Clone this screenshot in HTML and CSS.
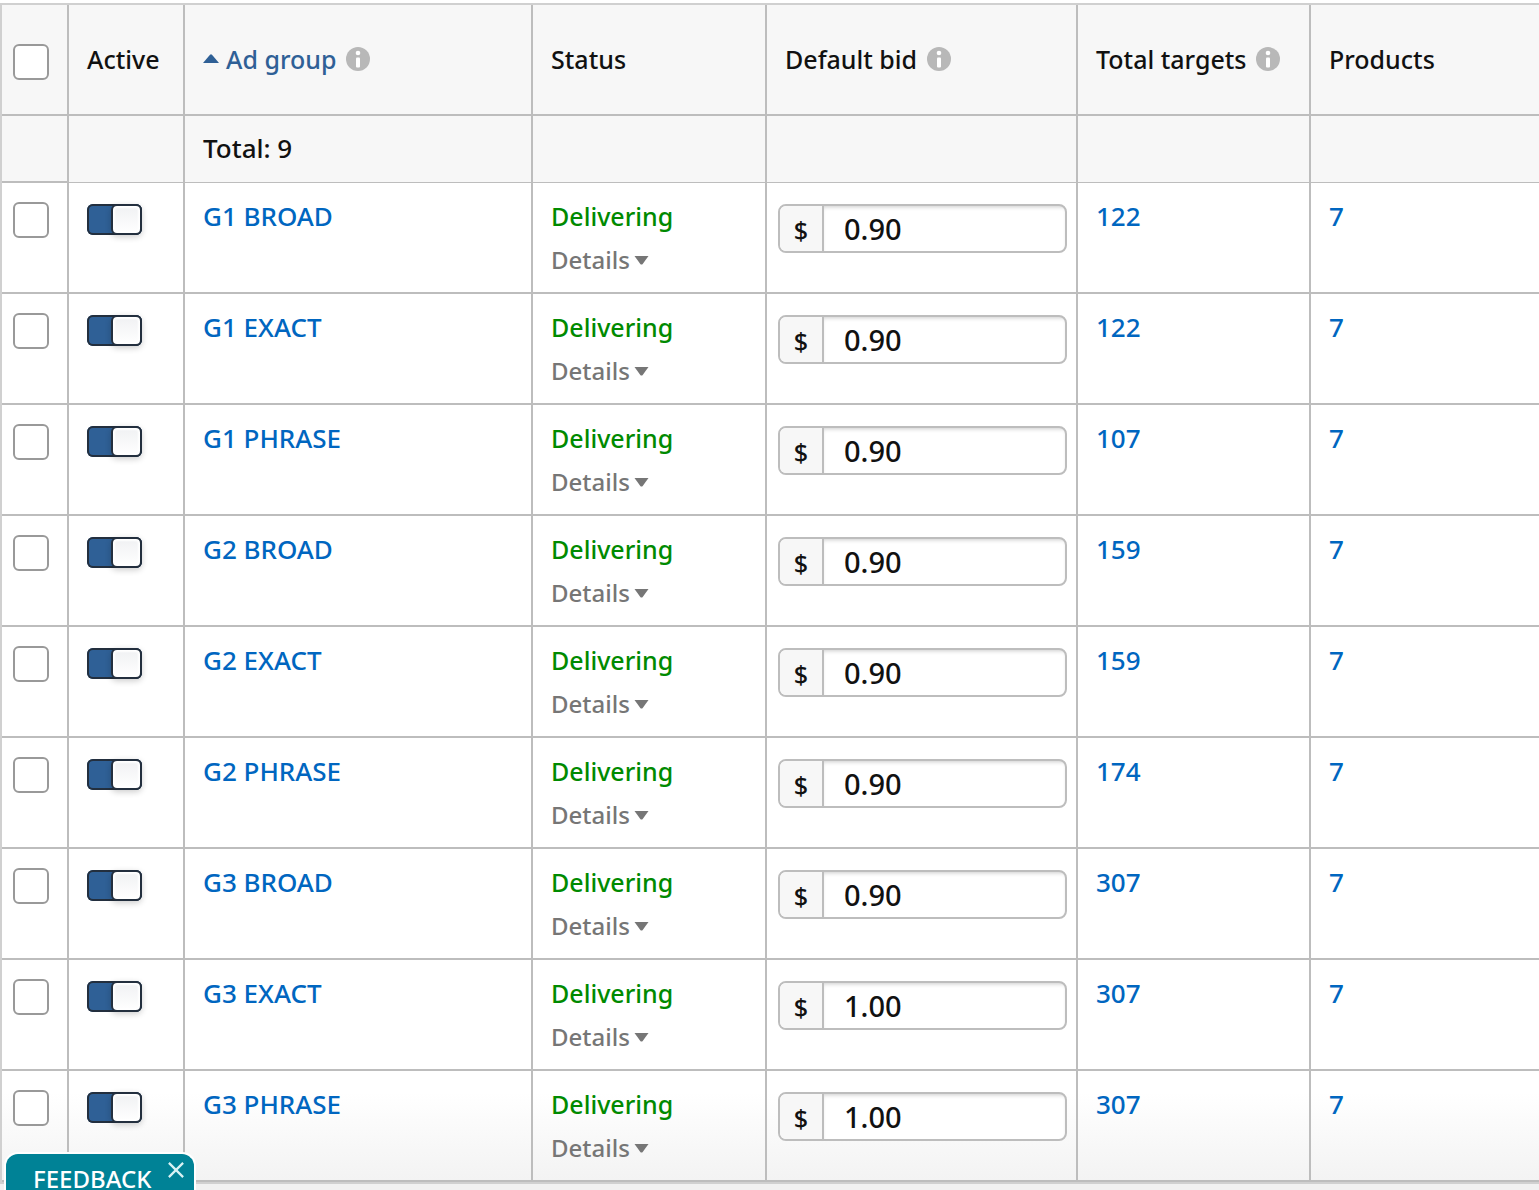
FILE: index.html
```
<!DOCTYPE html>
<html lang="en">
<head>
<meta charset="utf-8">
<title>Ad groups</title>
<link rel="stylesheet" href="styles.css">
</head>
<body>
<svg class="symbols">
  <symbol id="info" viewBox="0 0 24 24"><circle cx="12" cy="12" r="12" fill="#b8b8b8"/><circle cx="12" cy="6" r="2.3" fill="#fff"/><rect x="10" y="10.5" width="4" height="10" rx="1" fill="#fff"/></symbol>
  <symbol id="caret" viewBox="0 0 14 9"><path d="M0 0h14L8 8.200q-1 .8-2 0z" fill="currentColor"/></symbol>
  <symbol id="sort" viewBox="0 0 16 9"><path d="M0 9 7 .700q1-.9 2 0L16 9z" fill="currentColor"/></symbol>
</svg>
<main class="panel">
<table class="grid">
  <colgroup><col class="col-select"><col class="col-active"><col class="col-group"><col class="col-status"><col class="col-bid"><col class="col-targets"><col></colgroup>
  <thead>
    <tr class="head">
      <th scope="col"><input class="check" type="checkbox" aria-label="Select all"></th>
      <th scope="col">Active</th>
      <th scope="col"><span class="label"><a class="sorted" href="#"><svg class="sort"><use href="#sort"/></svg>Ad group</a><svg class="info"><use href="#info"/></svg></span></th>
      <th scope="col">Status</th>
      <th scope="col"><span class="label">Default bid<svg class="info"><use href="#info"/></svg></span></th>
      <th scope="col"><span class="label">Total targets<svg class="info"><use href="#info"/></svg></span></th>
      <th scope="col">Products</th>
    </tr>
    <tr class="total"><td></td><td></td><td>Total: 9</td><td></td><td></td><td></td><td></td></tr>
  </thead>
  <tbody>
    <tr>
      <td><input class="check" type="checkbox" aria-label="Select G1 BROAD"></td>
      <td><input class="toggle" type="checkbox" checked aria-label="G1 BROAD active"></td>
      <td><a href="#">G1 BROAD</a></td>
      <td><div class="state">Delivering</div><button class="details" type="button">Details<svg class="caret"><use href="#caret"/></svg></button></td>
      <td><label class="bid"><span class="unit">$</span><input type="text" value="0.90" aria-label="Default bid"></label></td>
      <td><a href="#">122</a></td>
      <td><a href="#">7</a></td>
    </tr>
    <tr>
      <td><input class="check" type="checkbox" aria-label="Select G1 EXACT"></td>
      <td><input class="toggle" type="checkbox" checked aria-label="G1 EXACT active"></td>
      <td><a href="#">G1 EXACT</a></td>
      <td><div class="state">Delivering</div><button class="details" type="button">Details<svg class="caret"><use href="#caret"/></svg></button></td>
      <td><label class="bid"><span class="unit">$</span><input type="text" value="0.90" aria-label="Default bid"></label></td>
      <td><a href="#">122</a></td>
      <td><a href="#">7</a></td>
    </tr>
    <tr>
      <td><input class="check" type="checkbox" aria-label="Select G1 PHRASE"></td>
      <td><input class="toggle" type="checkbox" checked aria-label="G1 PHRASE active"></td>
      <td><a href="#">G1 PHRASE</a></td>
      <td><div class="state">Delivering</div><button class="details" type="button">Details<svg class="caret"><use href="#caret"/></svg></button></td>
      <td><label class="bid"><span class="unit">$</span><input type="text" value="0.90" aria-label="Default bid"></label></td>
      <td><a href="#">107</a></td>
      <td><a href="#">7</a></td>
    </tr>
    <tr>
      <td><input class="check" type="checkbox" aria-label="Select G2 BROAD"></td>
      <td><input class="toggle" type="checkbox" checked aria-label="G2 BROAD active"></td>
      <td><a href="#">G2 BROAD</a></td>
      <td><div class="state">Delivering</div><button class="details" type="button">Details<svg class="caret"><use href="#caret"/></svg></button></td>
      <td><label class="bid"><span class="unit">$</span><input type="text" value="0.90" aria-label="Default bid"></label></td>
      <td><a href="#">159</a></td>
      <td><a href="#">7</a></td>
    </tr>
    <tr>
      <td><input class="check" type="checkbox" aria-label="Select G2 EXACT"></td>
      <td><input class="toggle" type="checkbox" checked aria-label="G2 EXACT active"></td>
      <td><a href="#">G2 EXACT</a></td>
      <td><div class="state">Delivering</div><button class="details" type="button">Details<svg class="caret"><use href="#caret"/></svg></button></td>
      <td><label class="bid"><span class="unit">$</span><input type="text" value="0.90" aria-label="Default bid"></label></td>
      <td><a href="#">159</a></td>
      <td><a href="#">7</a></td>
    </tr>
    <tr>
      <td><input class="check" type="checkbox" aria-label="Select G2 PHRASE"></td>
      <td><input class="toggle" type="checkbox" checked aria-label="G2 PHRASE active"></td>
      <td><a href="#">G2 PHRASE</a></td>
      <td><div class="state">Delivering</div><button class="details" type="button">Details<svg class="caret"><use href="#caret"/></svg></button></td>
      <td><label class="bid"><span class="unit">$</span><input type="text" value="0.90" aria-label="Default bid"></label></td>
      <td><a href="#">174</a></td>
      <td><a href="#">7</a></td>
    </tr>
    <tr>
      <td><input class="check" type="checkbox" aria-label="Select G3 BROAD"></td>
      <td><input class="toggle" type="checkbox" checked aria-label="G3 BROAD active"></td>
      <td><a href="#">G3 BROAD</a></td>
      <td><div class="state">Delivering</div><button class="details" type="button">Details<svg class="caret"><use href="#caret"/></svg></button></td>
      <td><label class="bid"><span class="unit">$</span><input type="text" value="0.90" aria-label="Default bid"></label></td>
      <td><a href="#">307</a></td>
      <td><a href="#">7</a></td>
    </tr>
    <tr>
      <td><input class="check" type="checkbox" aria-label="Select G3 EXACT"></td>
      <td><input class="toggle" type="checkbox" checked aria-label="G3 EXACT active"></td>
      <td><a href="#">G3 EXACT</a></td>
      <td><div class="state">Delivering</div><button class="details" type="button">Details<svg class="caret"><use href="#caret"/></svg></button></td>
      <td><label class="bid"><span class="unit">$</span><input type="text" value="1.00" aria-label="Default bid"></label></td>
      <td><a href="#">307</a></td>
      <td><a href="#">7</a></td>
    </tr>
    <tr>
      <td><input class="check" type="checkbox" aria-label="Select G3 PHRASE"></td>
      <td><input class="toggle" type="checkbox" checked aria-label="G3 PHRASE active"></td>
      <td><a href="#">G3 PHRASE</a></td>
      <td><div class="state">Delivering</div><button class="details" type="button">Details<svg class="caret"><use href="#caret"/></svg></button></td>
      <td><label class="bid"><span class="unit">$</span><input type="text" value="1.00" aria-label="Default bid"></label></td>
      <td><a href="#">307</a></td>
      <td><a href="#">7</a></td>
    </tr>
  </tbody>
</table>
</main>
<aside class="feedback">
  <a href="#">FEEDBACK</a>
  <button type="button" aria-label="Close feedback"><svg viewBox="0 0 18 18"><path d="M1 1l16 16M17 1L1 17" stroke="#d9f2f4" stroke-width="2.500"/></svg></button>
</aside>
</body>
</html>
```
FILE: styles.css
```
*, *::before { box-sizing: border-box; }
body {
  margin: 0;
  background: #f1f1f1;
  color: #111;
  font-family: "Noto Sans", "Open Sans", sans-serif;
  font-size: 25px;
  font-weight: 500;
  line-height: 34px;
}
a { color: #0066c0; text-decoration: none; }
.symbols { display: none; }
.panel {
  padding-top: 3px;
  background: #fff;
}
.grid {
  width: 100%;
  table-layout: fixed;
  border-collapse: separate;
  border-spacing: 0;
  border: 2px solid #d0d0d0;
  border-right: 0;
}
.col-select { width: 67px; }
.col-active { width: 116px; }
.col-group { width: 348px; }
.col-status { width: 234px; }
.col-bid { width: 311px; }
.col-targets { width: 233px; }
th, td {
  padding: 0 0 0 18px;
  border: 0 solid #bdbdbd;
  border-width: 0 2px 2px 0;
  text-align: left;
  white-space: nowrap;
}
th { font-weight: 500; }
th:last-child, td:last-child { border-right: 0; }
th:first-child, td:first-child { padding-left: 11px; }
.head { height: 111px; background: #f7f7f7; }
.head th { padding-bottom: 2px; }
.head th:first-child { padding-bottom: 0; padding-top: 4px; }
.total { height: 67px; background: #f7f7f7; }
.total td { padding-bottom: 2px; border-bottom-width: 1px; font-size: 26px; }
.total td:first-child { border-bottom-width: 2px; }
tbody tr { height: 111px; background: #fff; }
tbody td { padding-top: 16px; vertical-align: top; }
tbody td > a { display: inline-block; font-size: 26px; }
tbody tr:last-child td { background: linear-gradient(#fff 20%, #f3f3f3); }
.label, .sorted { display: flex; align-items: center; }
.label { gap: 10px; }
.sorted { gap: 7px; color: #2f6096; }
.sort { width: 16px; height: 9px; }
.info { width: 24px; height: 24px; }
.check, .toggle {
  display: block;
  appearance: none;
  margin: 0;
}
.check {
  width: 36px;
  height: 36px;
  border: 2px solid #999;
  border-radius: 6px;
  background: #fff;
}
td .check { margin-top: 3px; }
.toggle {
  display: flex;
  justify-content: flex-end;
  width: 55px;
  height: 31px;
  margin-top: 5px;
  border-radius: 6px;
  background: #2f6096;
  box-shadow: inset 0 0 0 2px #232f3e;
}
.toggle::before {
  content: "";
  width: 31px;
  height: 31px;
  border: 2px solid #232f3e;
  border-radius: 6px;
  background: linear-gradient(#f0f1f3, #fff);
  box-shadow: inset 0 0 2px 2px #fff, 0 2px 6px #0003;
}
.state { color: #008a00; }
.details {
  display: flex;
  align-items: center;
  gap: 4px;
  margin-top: 10px;
  padding: 0;
  border: 0;
  background: none;
  color: #767676;
  font: inherit;
  font-size: 24px;
  line-height: 34px;
}
.caret { width: 15px; height: 9px; }
td:nth-child(5) { padding-left: 11px; padding-right: 9px; }
.bid {
  display: flex;
  height: 49px;
  margin-top: 5px;
  border: 2px solid #bdbdbd;
  border-radius: 8px;
  background: #fff;
  overflow: hidden;
}
.unit {
  width: 44px;
  padding-top: 7px;
  border-right: 2px solid #bdbdbd;
  background: #f7f7f7;
  text-align: center;
}
.bid input {
  flex: 1;
  min-width: 0;
  padding: 0 20px;
  border: 0;
  background: transparent;
  box-shadow: inset 0 3px 4px -2px #0003;
  color: #111;
  font: inherit;
  font-size: 29px;
}
.feedback {
  position: fixed;
  left: 4px;
  bottom: 0;
  display: flex;
  justify-content: space-between;
  width: 192px;
  height: 38px;
  padding: 8px 10px 0 27px;
  border: 2px solid #fff;
  border-bottom: 0;
  border-radius: 14px 14px 0 0;
  background: #008296;
  overflow: hidden;
}
.feedback a { color: #fff; font-size: 24px; }
.feedback button {
  width: 16px;
  height: 16px;
  padding: 0;
  border: 0;
  background: none;
}
.feedback svg { display: block; }
```
